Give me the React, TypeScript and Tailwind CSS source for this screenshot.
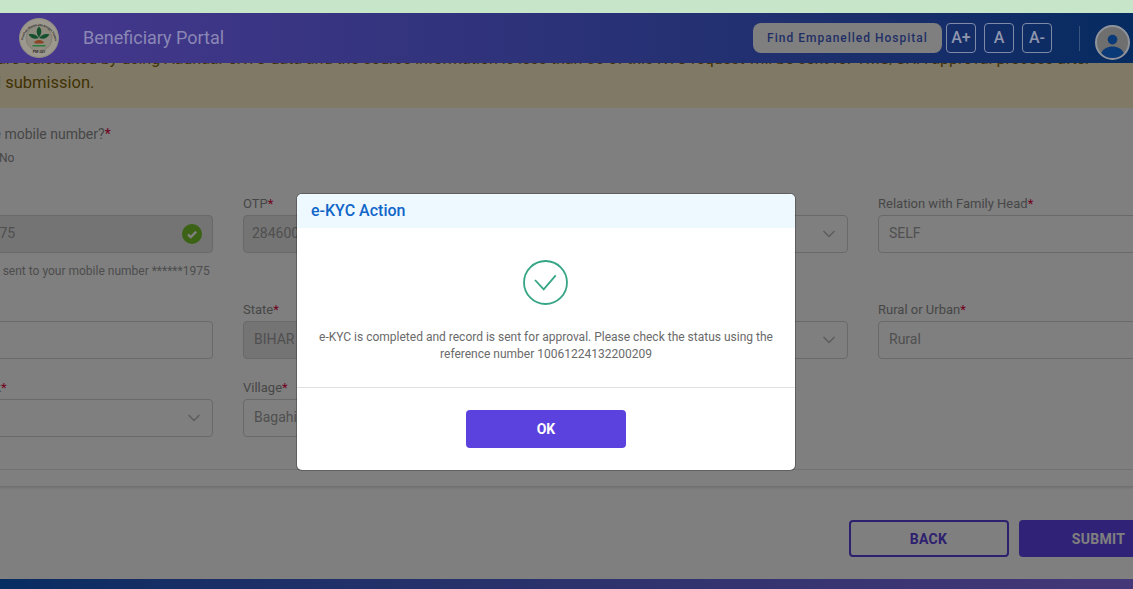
import { ChevronDown } from "lucide-react";

const Req = () => <span className="text-[#e3003c]">*</span>;

const Label = ({ text }: { text: string }) => (
  <div className="mb-[1px] h-[21px] pt-[1px] text-[13px] leading-5 text-[#8e8e8e] whitespace-nowrap">
    {text}
    <Req />
  </div>
);

const Field = ({
  label,
  value,
  disabled,
  select,
  check,
  help,
  valueClass,
}: {
  label: string;
  value?: string;
  disabled?: boolean;
  select?: boolean;
  check?: boolean;
  help?: string;
  valueClass?: string;
}) => (
  <div>
    <Label text={label} />
    <div
      className={`flex h-[38px] items-center justify-between rounded border border-[#d2d2d2] pr-[10px] text-sm text-[#a0a0a0] ${
        disabled ? "bg-[#e8e8e8]" : "bg-white"
      } ${valueClass ?? "pl-[10px]"}`}
    >
      <span className="-mt-[2px]">{value}</span>
      {select && <ChevronDown className="-mr-[2px] h-5 w-5 text-[#bcbcbc]" strokeWidth={2} />}
      {check && (
        <span className="flex h-5 w-5 items-center justify-center rounded-full bg-[#76c52a]">
          <svg viewBox="0 0 20 20" className="h-5 w-5" fill="none" stroke="#fff" strokeWidth="2.4">
            <path d="M6 10.5l2.8 2.6L14.2 7.6" />
          </svg>
        </span>
      )}
    </div>
    {help && <div className="mt-2 h-5 whitespace-nowrap text-xs leading-5 text-[#9a9a9a]">{help}</div>}
  </div>
);

const Radio = ({ text, checked }: { text: string; checked?: boolean }) => (
  <label className="flex items-center gap-1 text-xs leading-5 text-[#8e8e8e]">
    <span className="flex h-[13px] w-[13px] items-center justify-center rounded-full border border-[#9a9a9a]">
      {checked && <span className="h-[7px] w-[7px] rounded-full bg-[#5b41de]" />}
    </span>
    {text}
  </label>
);

// logo is approximated, the ring text is real text on a circle
const Logo = () => (
  <svg viewBox="0 0 40 40" className="h-10 w-10 shrink-0">
    <circle cx="20" cy="20" r="19.5" fill="#9d988d" stroke="#8e8a84" />
    <circle cx="20" cy="20" r="13" fill="#8f8b7f" stroke="#6f6c66" strokeWidth="0.5" />
    <defs>
      <path id="logo-ring" d="M4.2 22a15.900 15.900 0 0 1 31.600 0" />
    </defs>
    <text fontSize="3" fontWeight="700" fill="#2b2b2b" fontFamily="Roboto, sans-serif">
      <textPath href="#logo-ring">Pradhan Mantri Jan Arogya Yojana</textPath>
    </text>
    <path d="M20 8.500c3 3 3.200 6.500 0 11-3.200-4.500-3-8 0-11z" fill="#14502c" />
    <path d="M9.500 16.500c4.200-1.200 8 .3 10.200 3.500-4 1.600-7.600.4-10.200-3.500z" fill="#14502c" />
    <path d="M30.500 16.500c-4.200-1.200-8 .3-10.200 3.500 4 1.600 7.600.4 10.200-3.500z" fill="#14502c" />
    <path d="M15 24.500c1.500-3.500 8.500-3.500 10 0l-1.500 1h-7z" fill="#8a4524" />
    <rect x="13.500" y="27" width="13" height="1.500" fill="#2b7a3f" />
    <text x="20" y="34.500" fontSize="3.400" fontWeight="700" fill="#2b2b2b" textAnchor="middle" fontFamily="Roboto, sans-serif">
      PM-JAY
    </text>
  </svg>
);

const SizeButton = ({ text }: { text: string }) => (
  <button className="flex h-[30px] w-[30px] items-center justify-center rounded border border-[#7f8aa6] text-base font-medium text-[#8f96ad]">
    {text}
  </button>
);

const Header = () => (
  <header className="relative z-20 flex h-[50px] items-center bg-gradient-to-r from-[#47388f] to-[#052b61] pl-[19px]">
    <Logo />
    <div className="ml-[24px] text-lg text-[#8b87b4]">Beneficiary Portal</div>
    <div className="ml-auto flex items-center">
      <button className="mr-1 flex h-[30px] w-[189px] items-center justify-center rounded-lg bg-[#7f7f7f] text-xs font-medium tracking-[1px] text-[#1f2f66]">
        Find Empanelled Hospital
      </button>
      <div className="flex gap-2">
        <SizeButton text="A+" />
        <SizeButton text="A" />
        <SizeButton text="A-" />
      </div>
      <div className="ml-[27px] h-[25px] w-px bg-[#3a5480]" />
      <div className="ml-[15px] mr-[3px] mt-2 flex h-[35px] w-[35px] items-center justify-center overflow-hidden rounded-full border-2 border-[#8f949c] bg-[#6f6f6f]">
        <svg viewBox="0 0 32 32" className="h-full w-full">
          <circle cx="16" cy="13" r="5" fill="#0b3a78" />
          <path d="M4 28c2-6 7-8 12-8s10 2 12 8v4H4z" fill="#0b3a78" />
        </svg>
      </div>
    </div>
  </header>
);

const Modal = () => (
  <div className="absolute left-[297px] top-[194px] z-40 w-[498px] overflow-hidden rounded-[5px] bg-white shadow-[0_0_0_1px_rgba(0,0,0,0.25)]">
    <div className="flex h-[34px] items-center bg-[#edf9ff] px-[14px] text-base font-medium text-[#1166c9]">
      e-KYC Action
    </div>
    <div className="flex h-[160px] flex-col items-center border-b border-[#e0e0e0] px-5 pt-[32px]">
      <svg viewBox="0 0 45 45" className="-ml-px h-[45px] w-[45px]" fill="none" stroke="#36a586" strokeWidth="1.8">
        <circle cx="22.5" cy="22.500" r="21.500" />
        <path d="M12 20l8.700 9.300 12-14" />
      </svg>
      <p className="mt-[24px] text-center text-xs leading-[17px] text-[#6a6a6a]">
        e-KYC is completed and record is sent for approval. Please check the status using the
        <br />
        reference number 10061224132200209
      </p>
    </div>
    <div className="flex h-[82px] justify-center pt-[22px]">
      <button className="h-[38px] w-[160px] rounded bg-[#5b41de] text-sm font-bold text-white">OK</button>
    </div>
  </div>
);

export default function App() {
  return (
    <div className="relative flex h-[589px] w-[1133px] flex-col overflow-hidden bg-white [font-family:Roboto,sans-serif]">
      <div className="h-[13px] shrink-0 bg-[#c7e5c8]" />
      <Header />

      <div className="ml-[-74.5px] w-[1270px]">
        <div className="-mt-[20px] -mr-px bg-[#fff3cd] pb-[13px] pt-[4px] text-[16.5px] leading-6 text-[#856404]">
          <div className="pl-[24px] text-[16px] whitespace-nowrap">
            These are calculated by using Aadhaar eKYC data and the source information is less than 80 of this KYC request will be sent for TMS/SHA approval process after
          </div>
          <div className="pl-[17px] whitespace-nowrap">the final submission.</div>
        </div>

        <section className="bg-white pb-4 shadow-[0_2px_2px_rgba(0,0,0,0.12)]">
          <div className="pt-4">
            <div className="h-5 text-sm leading-5 text-[#8e8e8e] whitespace-nowrap">
              Is this same mobile number?
              <Req />
            </div>
            <div className="mb-[25px] mt-[4px] flex h-5 items-center gap-5">
              <Radio text="Yes" />
              <Radio text="No" checked />
            </div>
          </div>

          <div className="grid grid-cols-[repeat(4,287.5px)] gap-x-[30px] gap-y-[18px]">
            <Field label="Mobile No." value="9876541975" disabled check help="OTP has been sent to your mobile number ******1975" />
            <Field label="OTP" value="284600" disabled valueClass="pl-[8px]" />
            <Field label="Family Head" select />
            <Field label="Relation with Family Head" value="SELF" />
            <Field label="Pincode" />
            <Field label="State" value="BIHAR" disabled />
            <Field label="Gender" select />
            <Field label="Rural or Urban" value="Rural" />
            <Field label="Taluka/Block" select />
            <Field label="Village" value="Bagahi" />
          </div>

          <div className="mt-[32px] h-px bg-[#e4e4e4]" />
        </section>

        <div className="mt-[34px] flex justify-end gap-[10px] pr-[17px]">
          <button className="h-[37px] w-[160px] rounded border-2 border-[#5b41de] text-sm font-bold tracking-[0.3px] text-[#5b41de]">
            BACK
          </button>
          <button className="h-[37px] w-[160px] rounded bg-[#6045ee] text-sm font-bold tracking-[0.3px] text-white">
            SUBMIT
          </button>
        </div>
      </div>

      <div className="mt-auto h-[10px] shrink-0 bg-gradient-to-r from-[#0b5ac4] to-[#8a6ff0]" />

      <div className="absolute inset-x-0 bottom-0 top-[13px] z-10 bg-black/50" />
      <Modal />
    </div>
  );
}
